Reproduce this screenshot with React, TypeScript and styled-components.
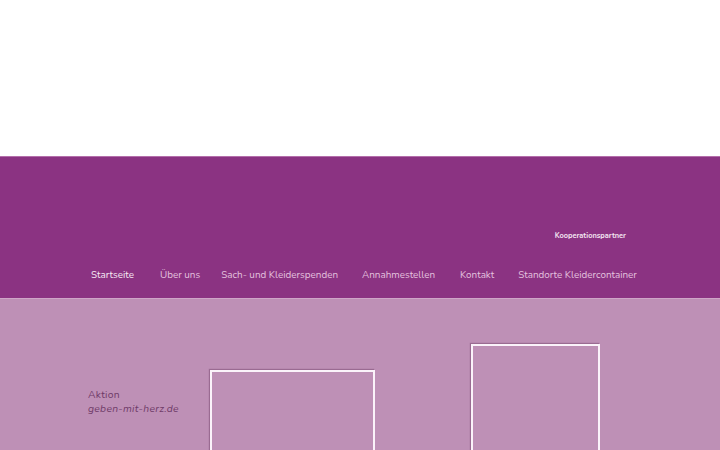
import styled, { createGlobalStyle } from "styled-components";

const GlobalStyle = createGlobalStyle`
  html, body {
    margin: 0;
    padding: 0;
    background: #ffffff;
    font-family: "Nunito", Lato, "Noto Sans", sans-serif;
  }
`;

const Page = styled.div`
  width: 720px;
  height: 450px;
  overflow: hidden;
  display: flex;
  flex-direction: column;
`;

const TopStrip = styled.div`
  flex-shrink: 0;
  height: 156px;
  background: #ffffff;
`;

const Header = styled.header`
  flex-shrink: 0;
  height: 142px;
  background: #8b3382;
  border-top: 1px solid #b46fab;
  box-sizing: border-box;
  display: flex;
  flex-direction: column;
`;

const PartnerRow = styled.div`
  display: flex;
  justify-content: flex-end;
  padding: 73px 94px 0 0;
  height: 12px;
`;

const PartnerLink = styled.a`
  font-size: 7.4px;
  font-weight: 700;
  color: #f4e6f2;
  text-decoration: none;
  line-height: 12px;
`;

const Nav = styled.nav`
  display: flex;
  align-items: center;
  padding: 26px 0 0 91px;
`;

const NavItem = styled.a<{ $active?: boolean; $space: number }>`
  margin-right: ${(p) => p.$space}px;
  font-size: 9.9px;
  line-height: 14px;
  color: ${(p) => (p.$active ? "#f6eaf4" : "#e4c2df")};
  text-decoration: none;
  white-space: nowrap;
`;

const Body = styled.main`
  flex: 1;
  min-height: 0;
  overflow: hidden;
  background: #be90b6;
  border-top: 1px solid #cfa6c8;
  display: flex;
  align-items: flex-start;
`;

const Intro = styled.div`
  width: 122px;
  padding: 89px 0 0 88px;
  color: #6e3a68;
  font-size: 10.3px;
  line-height: 14px;
  letter-spacing: 0.3px;
`;

const Italic = styled.div`
  font-style: italic;
`;

const Frame = styled.div<{ $top: number; $left: number; $width: number }>`
  flex-shrink: 0;
  margin-top: ${(p) => p.$top}px;
  margin-left: ${(p) => p.$left}px;
  width: ${(p) => p.$width}px;
  height: 200px;
  box-sizing: border-box;
  border: 2px solid #fbf3fa;
  box-shadow: -1px -1px 1px rgba(90, 40, 80, 0.35);
`;

const links = [
  { label: "Startseite", space: 26, active: true },
  { label: "Über uns", space: 21 },
  { label: "Sach- und Kleiderspenden", space: 24 },
  { label: "Annahmestellen", space: 25 },
  { label: "Kontakt", space: 24 },
  { label: "Standorte Kleidercontainer", space: 0 },
];

export default function App() {
  return (
    <Page>
      <GlobalStyle />
      <TopStrip />
      <Header>
        <PartnerRow>
          <PartnerLink>Kooperationspartner</PartnerLink>
        </PartnerRow>
        <Nav>
          {links.map((l) => (
            <NavItem key={l.label} $active={l.active} $space={l.space}>
              {l.label}
            </NavItem>
          ))}
        </Nav>
      </Header>
      <Body>
        <Intro>
          <div>Aktion</div>
          <Italic>geben-mit-herz.de</Italic>
        </Intro>
        <Frame $top={71} $left={0} $width={165} />
        <Frame $top={45} $left={96} $width={129} />
      </Body>
    </Page>
  );
}
